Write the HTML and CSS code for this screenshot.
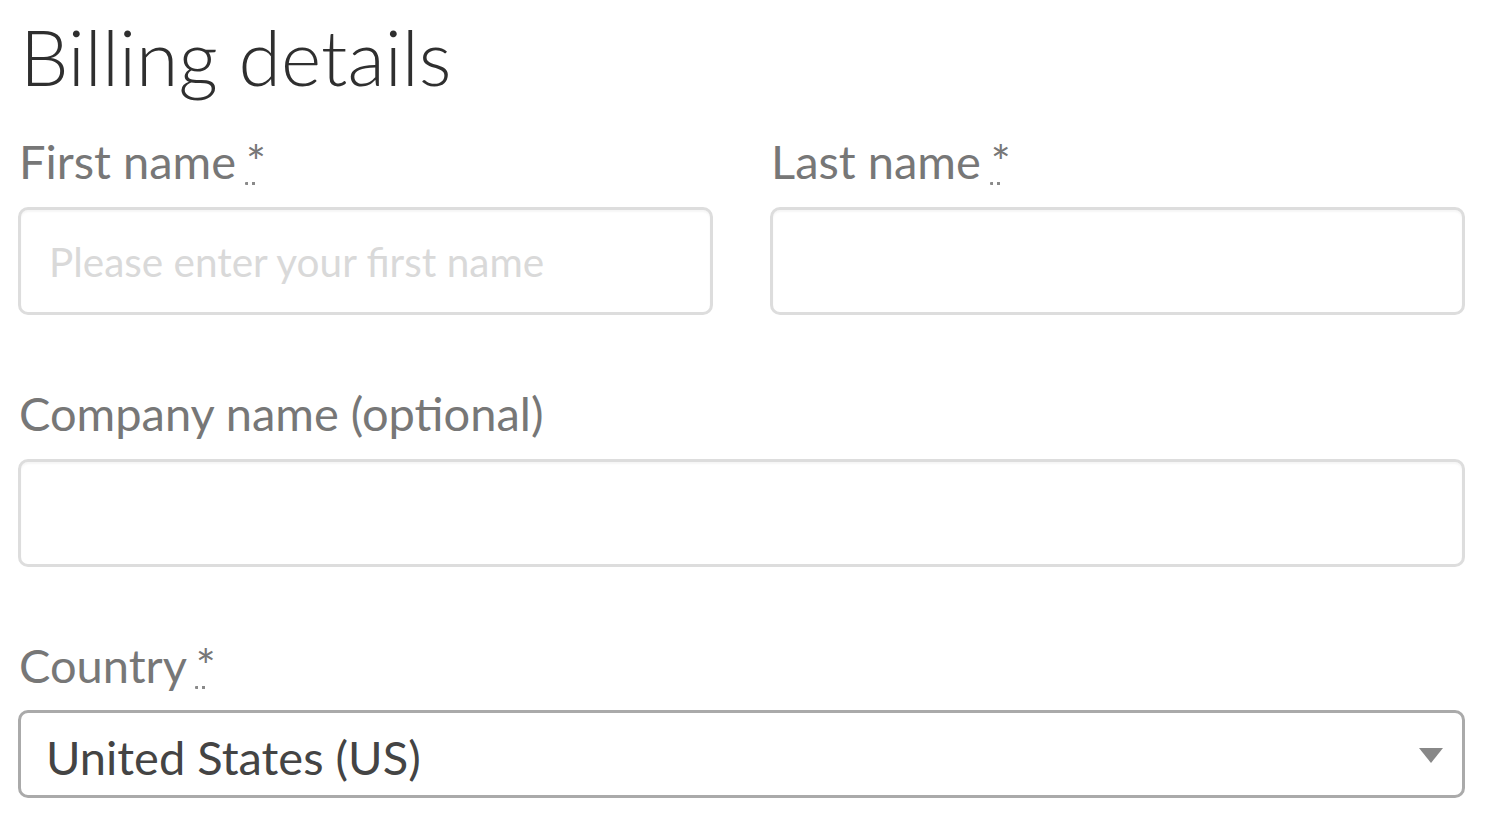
FILE: index.html
```html
<!DOCTYPE html>
<html lang="en">
<head>
<meta charset="utf-8">
<title>Billing details</title>
<link rel="stylesheet" href="styles.css">
</head>
<body>
<div class="billing">
  <h3 class="title">Billing details</h3>
  <div class="row two">
    <p class="field">
      <label class="label" for="fn">First name <abbr class="required" title="required">*</abbr></label>
      <input class="input" id="fn" type="text" placeholder="Please enter your first name">
    </p>
    <p class="field">
      <label class="label" for="ln">Last name <abbr class="required" title="required">*</abbr></label>
      <input class="input" id="ln" type="text">
    </p>
  </div>
  <div class="row">
    <p class="field">
      <label class="label" for="cn">Company name <span class="optional">(optional)</span></label>
      <input class="input" id="cn" type="text">
    </p>
  </div>
  <div class="row">
    <p class="field">
      <label class="label label-select" for="co">Country <abbr class="required" title="required">*</abbr></label>
      <span class="select-wrap">
        <select class="select" id="co">
          <option>United States (US)</option>
        </select>
      </span>
    </p>
  </div>
</div>
</body>
</html>
```
FILE: styles.css
```css
html, body {
  margin: 0;
  padding: 0;
  background: #fff;
}
body {
  font-family: "Lato", "Liberation Sans", sans-serif;
}
.billing {
  padding: 11px 30px 0 18px;
}
.title {
  margin: 0 0 31px 2px;
  font-size: 77px;
  line-height: 90px;
  font-weight: 300;
  color: #2f2f2f;
}
.row {
  margin-bottom: 69px;
}
.row:last-child {
  margin-bottom: 0;
}
.row.two {
  display: grid;
  grid-template-columns: 1fr 1fr;
  column-gap: 57px;
}
.field {
  margin: 0;
}
.label {
  display: block;
  margin: 0 0 17px 1px;
  font-size: 47px;
  line-height: 58px;
  color: #777;
}
.label-select {
  margin-bottom: 16px;
}
.required {
  position: relative;
  margin-left: -2px;
  text-decoration: none;
  color: #777;
  cursor: help;
}
.required::after {
  content: "";
  position: absolute;
  left: -1px;
  bottom: 4px;
  width: 11px;
  height: 3px;
  background-image: linear-gradient(to right, #8a8a8a 3px, transparent 3px);
  background-size: 7px 3px;
  background-repeat: repeat-x;
  border-radius: 1px;
}
.input {
  display: block;
  box-sizing: border-box;
  width: 100%;
  height: 108px;
  margin: 0;
  padding: 0 28px;
  border: 3px solid #ddd;
  border-radius: 10px;
  box-shadow: inset 0 2px 2px rgba(0, 0, 0, 0.04);
  background: #fff;
  font-family: "Lato", "Liberation Sans", sans-serif;
  font-size: 40.5px;
  color: #444;
  outline: none;
}
.input::placeholder {
  color: #d9d9d9;
}
.select-wrap {
  position: relative;
  display: block;
}
.select {
  display: block;
  box-sizing: border-box;
  width: 100%;
  height: 88px;
  margin: 0;
  padding: 6px 60px 0 25px;
  border: 3px solid #aaa;
  border-radius: 10px;
  background: #fff;
  appearance: none;
  -webkit-appearance: none;
  font-family: "Lato", "Liberation Sans", sans-serif;
  font-size: 47px;
  color: #444;
  outline: none;
}
.select-wrap::after {
  content: "";
  position: absolute;
  right: 22px;
  top: 38px;
  width: 0;
  height: 0;
  border-left: 12.5px solid transparent;
  border-right: 12.5px solid transparent;
  border-top: 15px solid #888;
  pointer-events: none;
}
```
